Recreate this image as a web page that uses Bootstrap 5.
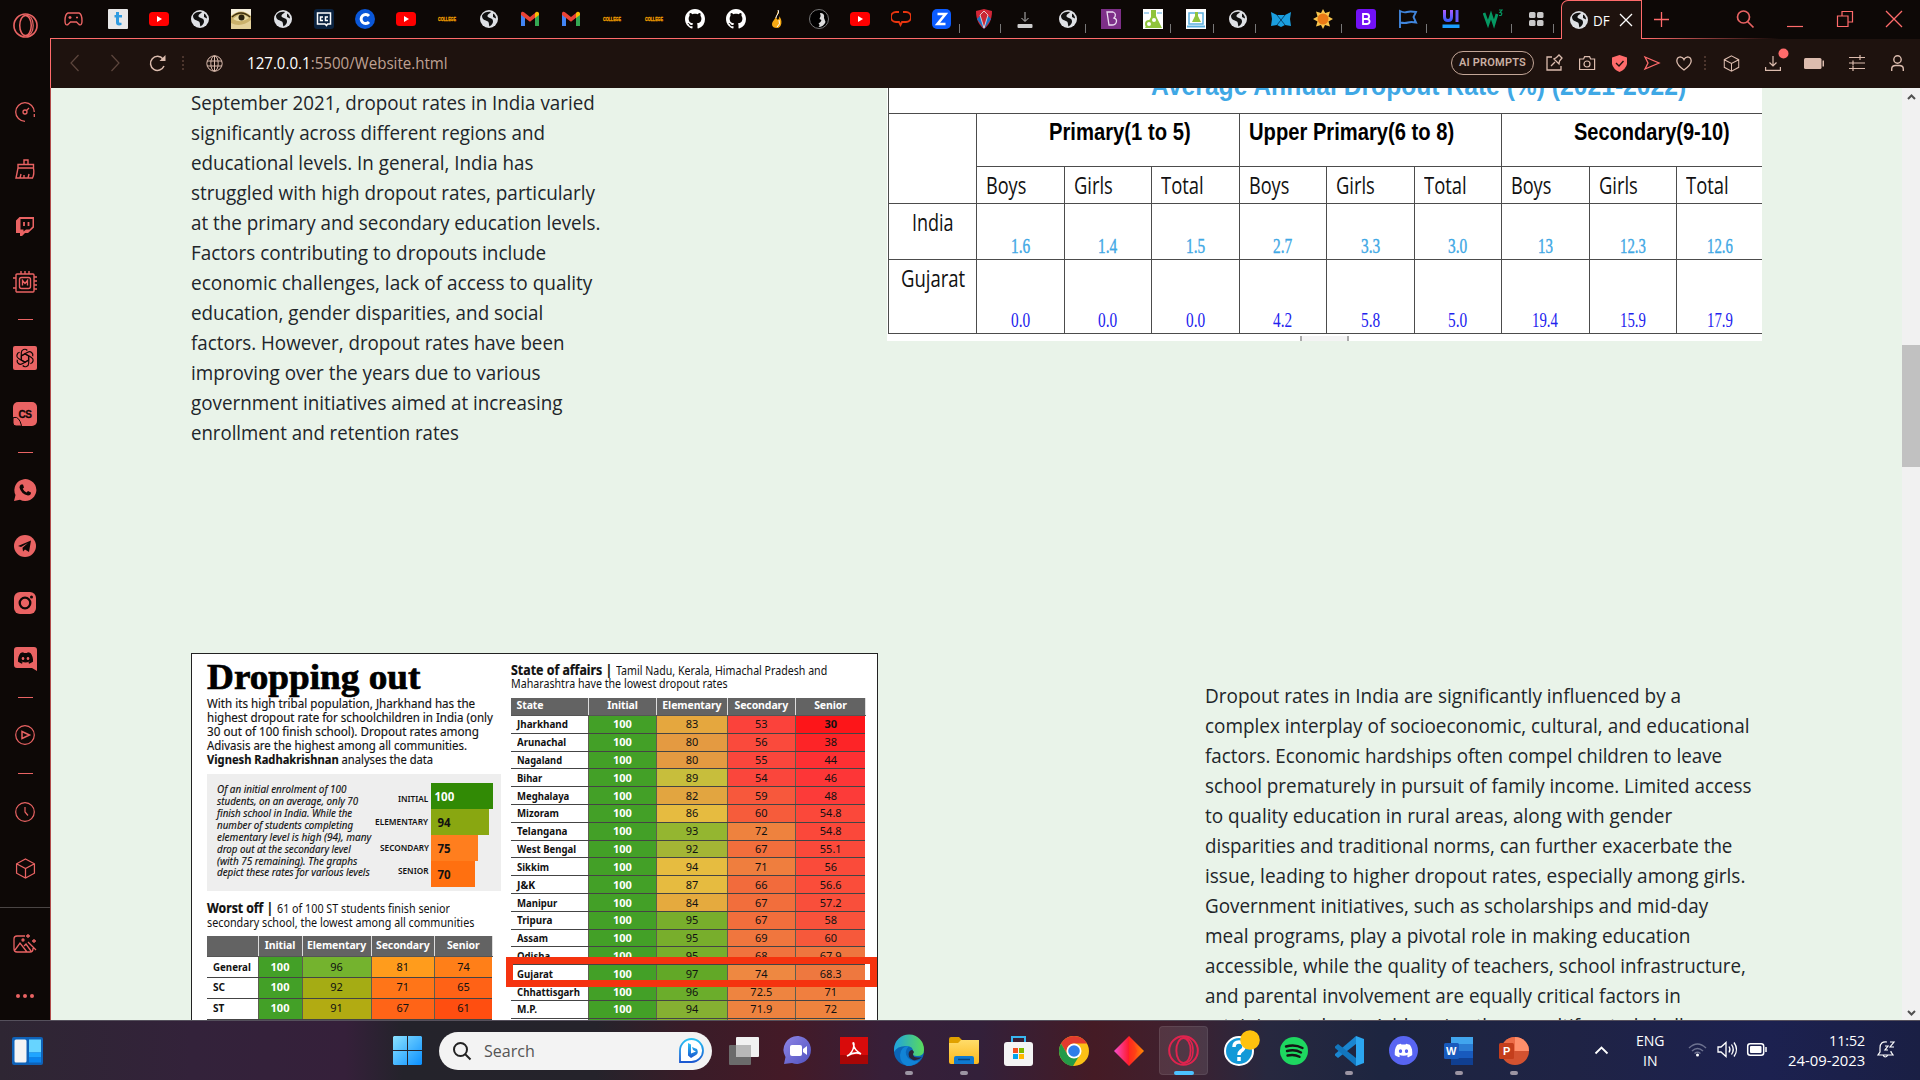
<!DOCTYPE html>
<html lang="en">
<head>
<meta charset="utf-8">
<title>Dropout rates</title>
<link href="https://cdn.jsdelivr.net/npm/bootstrap@5.3.0/dist/css/bootstrap.min.css" rel="stylesheet">
<style>
:root{--pink:#ff6b6b;--tan:#dcbcae}
body{width:1920px;height:1080px;overflow:hidden;background:#0d0806;font-family:"Open Sans","Noto Sans",sans-serif}
svg{display:block;flex:none;overflow:visible}
.fit{display:inline-block;white-space:nowrap;transform-origin:0 50%;text-align:left}
.desk{height:1020px}
.rail{width:50px;background:#0d0806;color:#e96363;padding-top:13px}
.rail .slot{height:56.5px}
.rail .first .slot{height:56.8px}
.rail .first{padding-top:46px}
.rail hr{width:15px;height:1px;margin:0;background:#e96363;opacity:1;border:0}
.tabs{height:38px;background:#0d0806}
.tabs .gx{width:47px;padding-left:14px}
.tabs .tb{width:41.24px}
.tabs .tw{width:42.56px}
.tabs .tick{position:absolute;right:3px;top:15px;width:1px;height:9px;background:#777}
.tabactive{width:81px;height:39px;margin-left:4px;background:#1e120e;border:1px solid var(--pink);border-bottom:0;border-top-left-radius:7px;color:#fff;font-size:15px;padding:0 9px 0 7px;z-index:2}
.tabactive b{font-weight:400;margin-left:4px}
.tabrule{height:1px;background:linear-gradient(90deg,var(--pink) 0 1595px,#0d0806 1730px)}
.tools{height:49px;background:#1e120e;color:var(--tan);border-left:1px solid var(--pink);padding-bottom:1px}
.aip{width:83px;height:24px;border:1.5px solid #c3a697;border-radius:12px;font:600 11px/21px Roboto,sans-serif;text-align:center;color:#cbb0a3;letter-spacing:.2px}
.vdots{width:0;height:14px;border-left:2px dotted #4b352d}
.url{font-size:16px;color:#bfa193;width:1000px}
.view{height:932px;overflow:hidden;background:#e9f3e9;border-left:1px solid #b14c4b}
.sbar{width:18px;background:#f1f1f1;color:#505050;font-size:9px}
.thumb{height:122px;width:18px;background:#c1c1c1}
.para{font-size:20px;line-height:30px;color:#212529}
.para div{height:30px;white-space:nowrap}
.sec1{height:565px;padding-left:140px}
.sec1 .para{width:696px}
.pic1{width:875px;height:253px;background:#fff;overflow:hidden;color:#111}
.pic1 table{width:875.5px;table-layout:fixed;border-collapse:collapse;margin-left:1px}
.pic1 td{border:1.5px solid #4c4c4c;padding:0 0 0 9px;vertical-align:top;overflow:visible}
.pic1 .ttl{height:25px;border-top:0;padding-left:262px}
.pic1 .ttl span{color:#3fa8e5;font:700 27px/30px "Liberation Sans",sans-serif;margin-top:-20px}
.pic1 .ttl div{height:24px;margin-top:-11px;margin-bottom:11px}
.pic1 .grp td{height:53.3px;font:700 24.5px/28px "Liberation Sans",sans-serif;color:#000;padding-top:4px}
.pic1 .grp td.far{padding-left:72px}
.pic1 .sub td{height:37.5px;font-size:24px;line-height:32px;padding-top:2px}
.pic1 .val td{vertical-align:bottom;text-align:center;padding:0 0 1px;font:21px/24px "Liberation Serif",serif;color:#3fa8e5}
.pic1 .val td:first-child{vertical-align:top;padding:2px 0 0;font:24px/32px "Open Sans",sans-serif;color:#111}
.pic1 .v1 td{height:56px;-webkit-text-stroke:.4px}
.pic1 .v2 td{height:73.5px;color:#2222ee}
.pic1 .v1 td:first-child{-webkit-text-stroke:0}
.pic1 .notch{margin:2px 0 0 413px;width:49px;height:6px;background:#f4f4f4;border:solid #aaa;border-width:0 2px}
.pic2{width:686.5px;height:420px;background:#fff;border:1.5px solid #222;color:#111;padding-left:14.5px;font-family:"Noto Sans",sans-serif;position:relative}
.pic2 .lcol{width:304px}
.pic2 h2{font:700 36px/40px "Liberation Serif",serif;margin:3px 0 0;height:40px;color:#000;-webkit-text-stroke:.7px #000}
.intro div{font-size:12.5px;line-height:14.1px;height:14.1px;-webkit-text-stroke:.15px #111}
.panelg{width:294px;height:117px;background:#eee;margin-top:7px;padding:9px 0 0 10.5px}
.panelg .ital div{font-style:italic;font-size:10.5px;line-height:11.87px;height:11.87px;-webkit-text-stroke:.15px #111}
.panelg .ital{width:152px;padding-top:1px}
.brow{height:26px;font-weight:700;font-size:11.5px}
.brow em{font-style:normal;font-weight:600;font-size:8.5px;width:59px;text-align:right;margin-right:2.5px}
.brow i{font-style:normal;height:26px;line-height:28px;padding-left:7px}
.heads{font-size:12.2px;line-height:13.6px}
.heads div{height:13.6px;white-space:nowrap}
.heads b{font-size:13.5px;margin-right:4px;-webkit-text-stroke:.2px #000}
.grid2{table-layout:fixed;border-collapse:collapse;font-size:11px;text-align:center}
.grid2 td,.grid2 th{padding:0;overflow:hidden;white-space:nowrap;border-bottom:1px solid #444;border-right:1px solid rgba(40,40,20,.75)}
.grid2 td:last-child{border-right:0}
.grid2 th{background:#636363;color:#fff;font-weight:700;font-size:10.5px;letter-spacing:-.1px;border-right:1px solid #ddd;border-bottom-color:#555}
.grid2 td:first-child,.grid2 .fst{text-align:left;font-weight:700;padding-left:6px}
.grid2 td:nth-child(2){background:#43a027;color:#fff;font-weight:700}
.redbox{position:absolute;left:314px;top:302.5px;width:371px;height:30px;border:7.5px solid #f5330f;border-left-width:7px}
.sec2{padding-left:140px}
.sec2 .para{margin:28px 0 0 327.5px}
.taskbar{height:60px;border-top:1px solid #55505c;color:#fff;background:linear-gradient(90deg,#2e2633 0,#33223a 10%,#35203a 18%,#24232b 21%,#25232b 31%,#3a1c28 36%,#441a27 41%,#371f38 46%,#33203a 51%,#451b25 57%,#40202e 61%,#27283f 66%,#1d2540 72%,#1f2345 82%,#1c2150 92%,#1a1f44 100%)}
.pill{width:273px;height:38px;border-radius:19px;background:#f3f3f3;color:#555;font-size:17px;padding:0 11px 0 14px}
.app{width:55px;height:59px;position:relative}
.app.run::after{content:"";position:absolute;left:24px;bottom:5px;width:8px;height:4px;border-radius:2px;background:#9c95a3}
.app.on::after{left:18px;width:20px;background:#4cc2ff}
.app.on::before{content:"";position:absolute;inset:5px 3px;border-radius:4px;background:rgba(255,255,255,.1);border:1px solid rgba(255,255,255,.08)}
.app svg{position:relative}
.tray{font-size:15px;line-height:20px}
</style>
</head>
<body>
<svg width="0" height="0" class="position-absolute"><defs>
<linearGradient id="gw" x1="0" y1="0" x2="1" y2="1"><stop stop-color="#8be2ff"/><stop offset="1" stop-color="#0a8fff"/></linearGradient>
<linearGradient id="ge" x1="0" y1="0" x2="1" y2="0"><stop stop-color="#1fa2e0"/><stop offset="1" stop-color="#5bdc5a"/></linearGradient>
<linearGradient id="gu" x1="0" y1="0" x2="0" y2="1"><stop stop-color="#b05cff"/><stop offset="1" stop-color="#3d5cff"/></linearGradient>
<linearGradient id="gm"><stop stop-color="#f64fd0"/><stop offset=".5" stop-color="#ff1a2a"/><stop offset="1" stop-color="#ff8a00"/></linearGradient>
<linearGradient id="gb" x1="0" y1="0" x2="0" y2="1"><stop stop-color="#29c3f5"/><stop offset="1" stop-color="#1b57d0"/></linearGradient>
<linearGradient id="gf" x1="0" y1="0" x2="0" y2="1"><stop stop-color="#ffdc6a"/><stop offset="1" stop-color="#fbb81c"/></linearGradient>
<linearGradient id="gt" x1="0" y1="0" x2="1" y2="1"><stop stop-color="#8f86e6"/><stop offset="1" stop-color="#5052c0"/></linearGradient>
<symbol id="globe" viewBox="0 0 20 20"><circle cx="10" cy="10" r="9" fill="#dfe1e5"/><path d="M3 6.500C5 3 9 2.500 12 3c-1 2-3 1.500-3.500 3.500C8 9 12 8.500 13.500 10.500 15 13 13 16 10.500 17.500 9.500 14.500 10.500 13 8 12 6 11 3 11 3 6.500z" fill="#111"/><path d="M14 4.500c2 1 3 3 3 5l-3-1.500z" fill="#111"/></symbol>
<symbol id="yt" viewBox="0 0 20 20"><rect y="3" width="20" height="14" rx="3.500" fill="#f00"/><path d="M8 7l5 3-5 3z" fill="#fff"/></symbol>
<symbol id="gmail" viewBox="0 0 20 20"><path d="M1 4v13h4V8z" fill="#4285f4"/><path d="M19 4v13h-4V8z" fill="#34a853"/><path d="M1 4.500C1 2.500 3 2.500 4 3.300l6 4.600 6-4.600V8l-6 4.700L1 6z" fill="#ea4335"/><path d="M15 4l1-.8c1.300-1 3 0 3 1.500V6l-4 3z" fill="#fbbc04"/></symbol>
<symbol id="col" viewBox="0 0 20 20"><text x="1" y="12" font-family="Liberation Sans" font-weight="700" font-size="5" textLength="18" lengthAdjust="spacingAndGlyphs" fill="#f5a300" stroke="#f5a300" stroke-width=".3">COLLEGE</text></symbol>
<symbol id="git" viewBox="0 0 16 16"><path fill="#fff" d="M8 0C3.580 0 0 3.580 0 8c0 3.540 2.290 6.530 5.470 7.590.4.070.55-.17.55-.38 0-.19-.01-.82-.01-1.490-2.010.37-2.530-.49-2.690-.94-.09-.23-.48-.94-.82-1.130-.28-.15-.68-.52-.01-.53.63-.01 1.080.58 1.230.82.72 1.210 1.870.87 2.330.66.07-.52.28-.87.51-1.070-1.780-.2-3.640-.89-3.640-3.950 0-.87.31-1.590.82-2.150-.08-.2-.36-1.020.08-2.120 0 0 .67-.21 2.200.82.64-.18 1.320-.27 2-.27s1.360.09 2 .27c1.530-1.040 2.200-.82 2.200-.82.44 1.100.16 1.920.08 2.120.51.56.82 1.270.82 2.150 0 3.070-1.870 3.750-3.650 3.950.29.25.54.73.54 1.480 0 1.070-.01 1.930-.01 2.200 0 .21.15.46.55.38A8.010 8.010 0 0 0 16 8c0-4.420-3.580-8-8-8"/></symbol>
<symbol id="tt" viewBox="0 0 20 20"><rect width="20" height="20" rx="1" fill="#e8e8e8"/><path d="M8 3h3v3h3v2.500h-3v4c0 1.500 1 1.500 2.500 1.200V16C10 17 8 16 8 13.500v-5H6.500V6H8z" fill="#2f9be0"/></symbol>
<symbol id="eye" viewBox="0 0 20 20"><rect width="20" height="20" fill="#c9b06b"/><path d="M0 0h20v7Q10-2 0 7z" fill="#f5efdc"/><path d="M0 20v-6q10 5 20-3v9z" fill="#e3d09a"/><path d="M2 10q8-8 16-1-8 6-16 1z" fill="#e9dca6"/><circle cx="10.500" cy="8.500" r="3" fill="#29210e"/><path d="M1 8q9-8 18 0" stroke="#3d3010" stroke-width="1.500" fill="none"/></symbol>
<symbol id="cc" viewBox="0 0 20 20"><rect width="20" height="20" rx="3" fill="#0b2340"/><path d="M3.500 4h13v11h-3l-1 1.500L11 15H3.500z" fill="none" stroke="#fff" stroke-width="1.500"/><path d="M9 8H6.500v3.500H9M14 8h-2.500v3.500H14" fill="none" stroke="#fff" stroke-width="1.500"/></symbol>
<symbol id="cb" viewBox="0 0 20 20"><circle cx="10" cy="10" r="10" fill="#0a57d8"/><path d="M14 7a4.500 4.500 0 1 0 0 6" fill="none" stroke="#fff" stroke-width="3"/></symbol>
<symbol id="flame" viewBox="0 0 20 20"><path d="M11 1c3 4-4 6-1 9 1 2 3-1 2-3 4 4 3 12-2 12-6 0-6-5-3-8 2-3 3-5 4-10z" fill="#f5a914"/><path d="M11 1c2 3-2 5-2 8M12 11q2 4-2 7" stroke="#fff" fill="none"/></symbol>
<symbol id="bust" viewBox="0 0 20 20"><circle cx="10" cy="10" r="9.500" fill="#000" stroke="#777"/><path d="M11 4q5 0 4 5l1.500 4q-2 5-7 5 2-2 0-3.500l2-1.500 1-2-2-1q2-3 .500-6z" fill="#ddd"/></symbol>
<symbol id="bub" viewBox="0 0 20 20"><path d="M8 3H5a4 4 0 0 0 0 10h3l1.500 3L11 13h4a4 4 0 0 0 0-10h-3" fill="none" stroke="#e8350f" stroke-width="1.800"/></symbol>
<symbol id="zz" viewBox="0 0 20 20"><rect width="19" height="20" rx="5" fill="#0b5cff"/><path d="M5.500 5h8l-8 10h8" fill="none" stroke="#fff" stroke-width="2.600"/></symbol>
<symbol id="shd" viewBox="0 0 20 20"><path d="M2 2l8-2 8 2c0 9-3 14-8 18C5 16 2 11 2 2z" fill="#d22638"/><path d="M3 10l7 10 7-10-7-7z" fill="#1a75c8"/><path d="M6 6l4-4 4 4-4 13z" fill="#ca2735" stroke="#eee" stroke-width=".8"/></symbol>
<symbol id="dlw" viewBox="0 0 20 20"><path d="M10 3v9M6.500 9l3.500 3.500L13.500 9" stroke="#bbb" fill="none"/><rect x="2.500" y="15" width="15" height="4" rx="1" fill="#ccc"/></symbol>
<symbol id="bp" viewBox="0 0 20 20"><rect width="20" height="20" fill="#7d2f88"/><path d="M6 3l6 0c3 1 3 4 1 6 4 1 3 7-2 7L8 16 6 3z" fill="none" stroke="#eadcf0" stroke-width="1.300"/></symbol>
<symbol id="lab" viewBox="0 0 20 20"><rect width="20" height="20" fill="#fff"/><path d="M8 1h5v6l6 12H2L8 8z" fill="#90c43c"/><circle cx="6" cy="15" r="3" fill="#fff" stroke="#90c43c" stroke-width="2"/><circle cx="11" cy="11" r="2" fill="#fff"/><path d="M1 4h5M14 4h5" stroke="#55a6dd"/></symbol>
<symbol id="lab2" viewBox="0 0 20 20"><rect width="20" height="20" fill="#fff"/><rect x="3" y="4" width="14" height="11" fill="none" stroke="#5bb0e0" stroke-width="1.500"/><path d="M9 3h3v4l3 6H6l3-6z" fill="#90c43c"/><path d="M1 17.500h18" stroke="#5bb0e0" stroke-width="2"/></symbol>
<symbol id="fox" viewBox="0 0 20 20"><path d="M0 3l6 3h8l6-3-1 7 1 7-6-1-4 2-4-2-6 1 1-7z" fill="#1b9fe0"/><path d="M6 6l8 10M14 6L6 16" stroke="#07466f"/></symbol>
<symbol id="sun" viewBox="0 0 20 20"><path d="M10 0l2.200 4 4.800-1.500L15.500 7.500 20 10l-4.500 2.500L17 17.500 12 16l-2 4-2-4-5 1.500 1.500-5L0 10l4.500-2.500L3 2.500 8 4z" fill="#f8c64e"/><circle cx="10" cy="10" r="5.500" fill="#ea7a16"/></symbol>
<symbol id="bs" viewBox="0 0 20 20"><rect width="20" height="20" rx="3" fill="#7211f5"/><path d="M7 5v10h3.500c4 0 4-5 .5-5H7h3.500c3.500 0 3.500-5 0-5z" fill="none" stroke="#fff" stroke-width="1.800"/></symbol>
<symbol id="flag" viewBox="0 0 20 20"><path d="M2 19V2q4 2 7 1t9 0l-2.500 5 2.500 5.500q-5-1-8 0t-8 0" fill="none" stroke="#4186dd" stroke-width="1.900"/></symbol>
<symbol id="uii" viewBox="0 0 20 20"><path d="M3.500 1v7q0 3.500 3.500 3.500T10.500 8V1" fill="none" stroke="url(#gu)" stroke-width="3"/><path d="M16 1v12" stroke="#6a5cff" stroke-width="3"/><rect x="1.500" y="15.500" width="17" height="3.500" fill="#1b9fff"/></symbol>
<symbol id="w3" viewBox="0 0 20 20"><path d="M1 4l4 11L8 6l3 9 3-10" fill="none" stroke="#059862" stroke-width="2.800"/><path d="M16 1h3l-2 2.500q3 0 1 3h-2" fill="none" stroke="#059862" stroke-width="1.200"/></symbol>
<symbol id="four" viewBox="0 0 20 20"><g fill="#c9c9c9"><rect x="3" y="3" width="6.500" height="6" rx="1.500"/><rect x="11" y="3" width="6.500" height="6" rx="1.500"/><rect x="3" y="11" width="6.500" height="6" rx="1.500"/><rect x="11" y="11" width="6.500" height="6" rx="1.500"/></g></symbol>
<symbol id="disc" viewBox="0 0 16 16"><path d="M13.545 2.907a13.200 13.200 0 0 0-3.257-1.011.05.05 0 0 0-.052.025c-.141.250-.297.577-.406.833a12.200 12.200 0 0 0-3.658 0 8 8 0 0 0-.412-.833.050.050 0 0 0-.052-.025c-1.125.194-2.220.534-3.257 1.011a.040.040 0 0 0-.021.018C.356 6.024-.213 9.047.066 12.032q.003.022.021.037a13.300 13.300 0 0 0 3.995 2.020.050.050 0 0 0 .056-.019q.463-.630.818-1.329a.050.050 0 0 0-.010-.059 9 9 0 0 1-1.248-.595.050.050 0 0 1 .020-.066l.248-.195a.050.050 0 0 1 .051-.007c2.619 1.196 5.454 1.196 8.041 0a.050.050 0 0 1 .053.007q.121.100.248.195a.050.050 0 0 1-.004.085 8 8 0 0 1-1.249.594.050.050 0 0 0-.030.030.050.050 0 0 0 .003.041c.240.465.515.909.817 1.329a.050.050 0 0 0 .056.019 13.200 13.200 0 0 0 4.001-2.020.050.050 0 0 0 .021-.037c.334-3.451-.559-6.449-2.366-9.106a.030.030 0 0 0-.020-.019M5.347 10.214c-.789 0-1.438-.724-1.438-1.612s.637-1.613 1.438-1.613c.807 0 1.450.730 1.438 1.613 0 .888-.637 1.612-1.438 1.612m5.316 0c-.788 0-1.438-.724-1.438-1.612s.637-1.613 1.438-1.613c.807 0 1.451.730 1.438 1.613 0 .888-.631 1.612-1.438 1.612"/></symbol>
<symbol id="cube" viewBox="0 0 20 20"><path d="M10 1l8.500 4.500v9L10 19l-8.500-4.500v-9zM1.500 5.500L10 10l8.500-4.500M10 10v9" fill="none" stroke="currentColor" stroke-width="1.200"/></symbol>
<symbol id="opera" viewBox="0 0 26 26"><ellipse cx="13" cy="13" rx="12" ry="12" fill="none" stroke="currentColor" stroke-width="1.700"/><ellipse cx="13" cy="13" rx="6" ry="10.500" fill="none" stroke="currentColor" stroke-width="1.600"/><path d="M13 2.500c5-1 8 4 8 10.500s-3 11-8 10.500" fill="none" stroke="currentColor" stroke-width="1.300"/></symbol>
</defs></svg>

<div class="desk d-flex">
  <nav class="rail d-flex flex-column align-items-center flex-shrink-0">
    <svg width="25" height="25" color="#e96363"><use href="#opera"/></svg>
    <div class="first d-flex flex-column align-items-center">
      <div class="slot d-flex align-items-center"><svg width="20" height="20" viewBox="0 0 20 20" fill="none" stroke="currentColor" stroke-width="1.300"><path d="M10 19.300A9.300 9.300 0 1 1 19.300 10M19.300 12v3"/><circle cx="10" cy="10" r="2"/><path d="M11.500 8.500L14 6"/></svg></div>
      <div class="slot d-flex align-items-center"><svg width="20" height="20" viewBox="0 0 20 20" fill="none" stroke="currentColor" stroke-width="1.400"><path d="M9 5V1h4v4M3 9V5.500h15.500V9zM3 9L1 19h16.500q2-4 1-10M5 19l1-4M9 19v-3M13 19l1-4"/></svg></div>
      <div class="slot d-flex align-items-center"><svg width="20" height="20" viewBox="0 0 20 20"><path d="M4.500 1H19v10.500L13 17h-3l-3 3H5v-3H1V4.500z" fill="currentColor"/><path d="M5.500 3h12v7.500l-3 3H11l-2.500 2v-2h-3z" fill="#0d0806"/><path d="M9 6v4M13.500 6v4" stroke="currentColor" stroke-width="1.800"/></svg></div>
      <div class="slot d-flex align-items-center"><svg width="24" height="24" viewBox="0 0 24 24" fill="none" stroke="currentColor" stroke-width="1.400"><rect x="3" y="3" width="18" height="18" rx="1"/><rect x="6.500" y="6.500" width="11" height="11" rx="2"/><path d="M9.500 14.500v-5l2.500 3 2.500-3v5M8 3V0M12 3V0M16 3V0M21 6h3M21 10h3M21 14h3M21 18h3M3 7H0M3 17H0"/></svg></div>
    </div>
    <hr style="margin-top:7.500px">
    <div class="d-flex align-items-center" style="height:77px"><svg width="24" height="24" viewBox="0 0 24 24"><rect width="24" height="24" rx="2" fill="currentColor"/><g fill="none" stroke="#0d0806" stroke-width="1.200"><path id="pt" d="M8.300 9.500V6.700a3.400 3.400 0 0 1 6-2.200M8.300 9.500l0 4.500 3.700 2.100"/><use href="#pt" transform="rotate(60 12 12)"/><use href="#pt" transform="rotate(120 12 12)"/><use href="#pt" transform="rotate(180 12 12)"/><use href="#pt" transform="rotate(240 12 12)"/><use href="#pt" transform="rotate(300 12 12)"/></g></svg></div>
    <div class="d-flex align-items-center" style="height:34px"><svg width="24" height="24" viewBox="0 0 24 24"><path d="M5 0h14a5 5 0 0 1 5 5v14a5 5 0 0 1-5 5H9L0 15V5a5 5 0 0 1 5-5z" fill="currentColor"/><path d="M1 15.500Q6 14 8.500 23.500L8 24H3a3 3 0 0 1-3-3v-5z" fill="currentColor" stroke="#0d0806"/><text x="5.500" y="16" font-family="Liberation Sans" font-weight="700" font-size="10" fill="#0d0806" stroke="#0d0806" stroke-width=".3" textLength="13.500">CS</text></svg></div>
    <hr style="margin-top:21px">
    <div class="d-flex flex-column" style="padding-top:9px">
      <div class="slot d-flex align-items-center"><svg width="22" height="22" viewBox="0 0 22 22"><path d="M0 22l1.500-6A11 11 0 1 1 6 20.700z" fill="currentColor"/><path d="M7 5.500l2 0 1 3-1.300 1.300q1.300 2.700 3.800 3.700L14 12l3 1.500q0 3-3 3Q7 15 5.500 8.500q0-2 1.500-3z" fill="#0d0806"/></svg></div>
      <div class="slot d-flex align-items-center"><svg width="22" height="22" viewBox="0 0 22 22"><circle cx="11" cy="11" r="11" fill="currentColor"/><path d="M4 11l13-5.500-2 11.500-4-2.500-2 2-.5-3.700 5.500-4.800-7 4z" fill="#0d0806"/></svg></div>
      <div class="slot d-flex align-items-center"><svg width="22" height="22" viewBox="0 0 22 22"><rect width="22" height="22" rx="6" fill="currentColor"/><circle cx="11" cy="11" r="5.300" fill="none" stroke="#0d0806" stroke-width="2.300"/><circle cx="17.500" cy="5" r="1.500" fill="#0d0806"/></svg></div>
      <div class="slot d-flex align-items-center"><svg width="23" height="24" viewBox="0 0 23 24"><path d="M3 0h17a3 3 0 0 1 3 3v21l-5-3H3a3 3 0 0 1-3-3V3a3 3 0 0 1 3-3z" fill="currentColor"/><svg x="4" y="3.500" width="15" height="15" fill="#0d0806"><use href="#disc"/></svg></svg></div>
    </div>
    <hr style="margin-top:9px">
    <div class="d-flex align-items-center" style="height:75px"><svg width="20" height="20" viewBox="0 0 20 20" fill="none" stroke="currentColor" stroke-width="1.200"><circle cx="10" cy="10" r="9.300"/><path d="M7 6.500l7.500 3.500L7 13.500z" stroke-width="1.500"/></svg></div>
    <hr>
    <div class="d-flex align-items-center" style="height:76px"><svg width="20" height="20" viewBox="0 0 20 20" fill="none" stroke="currentColor" stroke-width="1.200"><circle cx="10" cy="10" r="9.300"/><path d="M10 5v5l3 3.500"/></svg></div>
    <div class="d-flex align-items-center" style="height:37px"><svg width="21" height="21"><use href="#cube"/></svg></div>
    <div style="width:50px;height:1px;background:#4a4544;margin-top:20px"></div>
    <div class="d-flex align-items-center" style="height:72px"><svg width="24" height="20" viewBox="0 0 24 20" fill="none" stroke="currentColor" stroke-width="1.300"><path d="M12 2H4a3 3 0 0 0-3 3v10a3 3 0 0 0 3 3h13a3 3 0 0 0 3-3v-1M2 16l5-7 7 9M11 12l2-2 5 7M15 8l8 8M15 0v4M13 2h4M21 5v4M19 7h4"/><circle cx="10" cy="6" r="1"/></svg></div>
    <svg width="18" height="4" viewBox="0 0 18 4" style="margin-top:14px" fill="currentColor"><circle cx="2" cy="2" r="2"/><circle cx="9" cy="2" r="2"/><circle cx="16" cy="2" r="2"/></svg>
  </nav>

  <div class="flex-grow-1">
    <div class="tabs d-flex align-items-center">
      <div class="gx"><svg width="19" height="14" viewBox="0 0 19 14" fill="none" stroke="#e96363" stroke-width="1.400"><path d="M4 1h11q3 1 3 8 0 5-3 3.500L12.500 10h-6L4 12.500Q1 14 1 9q0-7 3-8z"/><path d="M6 4v3M4.500 5.500h3M12 5.500h2"/></svg></div>
      <div class="d-flex" id="strip"></div>
      <div class="tabactive d-flex align-items-center align-self-start position-relative"><svg width="20" height="20"><use href="#globe"/></svg><b><span class="fit" data-w="17">DF</span></b><svg width="12" height="12" class="ms-auto" viewBox="0 0 12 12" stroke="#fff" stroke-width="1.300"><path d="M0 0l12 12M12 0L0 12"/></svg></div>
      <svg width="15" height="15" viewBox="0 0 15 15" stroke="#ff6b6b" stroke-width="1.300" style="margin-left:12px"><path d="M7.500 0v15M0 7.500h15"/></svg>
      <svg width="18" height="18" viewBox="0 0 18 18" fill="none" stroke="#e96363" stroke-width="1.700" style="margin-left:67px"><circle cx="7.500" cy="7" r="6"/><path d="M11.500 11.500l6 6"/></svg>
      <svg width="16" height="16" viewBox="0 0 16 16" stroke="#ff6b6b" stroke-width="1.200" style="margin-left:33px"><path d="M0 15.500h16"/></svg>
      <svg width="16" height="16" viewBox="0 0 16 16" fill="none" stroke="#ff6b6b" stroke-width="1.200" style="margin-left:34px"><path d="M.5 5h10.500v10.500H.5zM5 5V.5h10.500V11H11"/></svg>
      <svg width="16" height="16" viewBox="0 0 16 16" stroke="#ff6b6b" stroke-width="1.300" style="margin-left:33px"><path d="M0 0l16 16M16 0L0 16"/></svg>
    </div>
    <div class="tabrule"></div>
    <div class="tools d-flex align-items-center">
      <svg width="9" height="16" viewBox="0 0 9 16" fill="none" stroke="#5d463d" stroke-width="1.200" style="margin-left:19px"><path d="M8.500 0L1 8l7.500 8"/></svg>
      <svg width="9" height="16" viewBox="0 0 9 16" fill="none" stroke="#5d463d" stroke-width="1.200" style="margin-left:32px"><path d="M.5 0L8 8l-7.500 8"/></svg>
      <svg width="17" height="16" viewBox="0 0 17 16" fill="none" stroke="currentColor" stroke-width="1.500" style="margin-left:29px"><path d="M15 11A7 7 0 1 1 14 4"/><path d="M16.500 0v6h-6z" fill="currentColor" stroke="none"/></svg>
      <div class="vdots" style="margin-left:16px"></div>
      <svg width="17" height="17" viewBox="0 0 17 17" fill="none" stroke="currentColor" style="margin-left:22px"><circle cx="8.500" cy="8.500" r="7.700"/><ellipse cx="8.500" cy="8.500" rx="3.700" ry="7.700"/><path d="M8.500 1v15M1 6h15M1 11h15"/></svg>
      <div class="url" style="margin-left:24px"><span class="fit" data-w="201"><span class="text-white">127.0.0.1</span>:5500/Website.html</span></div>
      <div class="d-flex align-items-center ms-auto" style="margin-right:14px">
        <div class="aip">AI PROMPTS</div>
        <svg width="16" height="16" viewBox="0 0 16 16" fill="none" stroke="currentColor" stroke-width="1.300" style="margin-left:12px"><path d="M6 2H1v13h14v-4M5 11l4-4M8 4l5 5 .5-3L16 3 13 0l-2.500 2.500z"/></svg>
        <svg width="16" height="14" viewBox="0 0 16 14" fill="none" stroke="currentColor" stroke-width="1.200" style="margin-left:17px"><path d="M.6 3h4l1-2.300h5l1 2.300h4v10.500H.6z"/><circle cx="8" cy="8" r="3"/></svg>
        <svg width="15" height="17" viewBox="0 0 15 17" style="margin-left:17px"><path d="M7.500 0L15 2.500V9q-1 5-7.500 8Q1 14 0 9V2.500z" fill="#ff6b6b"/><path d="M4 8l3 3 4.500-5" fill="none" stroke="#1e120e" stroke-width="1.400"/></svg>
        <svg width="16" height="14" viewBox="0 0 16 14" fill="none" stroke="#ff6b6b" stroke-width="1.300" style="margin-left:17px"><path d="M1 1l14 6L1 13l3-6z"/></svg>
        <svg width="16" height="15" viewBox="0 0 16 15" fill="none" stroke="currentColor" stroke-width="1.300" style="margin-left:16px"><path d="M8 14Q1 9 .8 5 1 1 4.300.8 7 1 8 3.500 9 1 11.700.8 15 1 15.200 5 15 9 8 14z"/></svg>
        <div class="vdots" style="margin-left:12px"></div>
        <svg width="17" height="17" style="margin-left:17px"><use href="#cube"/></svg>
        <svg width="16" height="16" viewBox="0 0 16 16" fill="none" stroke="currentColor" stroke-width="1.200" style="margin-left:25px"><path d="M8 1v10M4.500 7.500L8 11l3.500-3.500M.6 12v3.400h14.800V12"/><circle cx="18.500" cy="-1.500" r="5" fill="#ff6b6b" stroke="none"/></svg>
        <svg width="20" height="11" viewBox="0 0 20 11" fill="currentColor" style="margin-left:23px"><rect width="17.500" height="11" rx="1.500"/><rect x="18.500" y="2.500" width="1.500" height="6"/></svg>
        <svg width="16" height="16" viewBox="0 0 16 16" stroke="currentColor" stroke-width="1.200" style="margin-left:25px"><path d="M0 2.500h16M0 8h16M0 13.500h16M11 0v5M4 5.500v5M4 11v5"/></svg>
        <svg width="13" height="16" viewBox="0 0 13 16" fill="none" stroke="currentColor" stroke-width="1.400" style="margin-left:26px;margin-right:2px"><circle cx="6.500" cy="4.500" r="3.700"/><path d="M.7 16v-2q0-3.500 4-3.500h3.600q4 0 4 3.500v2"/></svg>
      </div>
    </div>
    <div class="d-flex">
      <main class="view flex-grow-1">
        <section class="sec1 d-flex">
          <div class="para">
            <div><span class="fit" data-w="404">September 2021, dropout rates in India varied</span></div>
            <div><span class="fit" data-w="354">significantly across different regions and</span></div>
            <div><span class="fit" data-w="342">educational levels. In general, India has</span></div>
            <div><span class="fit" data-w="404">struggled with high dropout rates, particularly</span></div>
            <div><span class="fit" data-w="409">at the primary and secondary education levels.</span></div>
            <div><span class="fit" data-w="355">Factors contributing to dropouts include</span></div>
            <div><span class="fit" data-w="401">economic challenges, lack of access to quality</span></div>
            <div><span class="fit" data-w="352">education, gender disparities, and social</span></div>
            <div><span class="fit" data-w="373">factors. However, dropout rates have been</span></div>
            <div><span class="fit" data-w="350">improving over the years due to various</span></div>
            <div><span class="fit" data-w="372">government initiatives aimed at increasing</span></div>
            <div><span class="fit" data-w="268">enrollment and retention rates</span></div>
          </div>
          <div class="pic1 flex-shrink-0">
            <table>
              <colgroup><col style="width:88px"><col span="9" style="width:87.500px"></colgroup>
              <tr><td colspan="10" class="ttl"><div><span class="fit" data-w="535">Average Annual Dropout Rate (%) (2021-2022)</span></div></td></tr>
              <tr class="grp"><td rowspan="2"></td><td colspan="3" class="far"><span class="fit" data-w="142">Primary(1 to 5)</span></td><td colspan="3"><span class="fit" data-w="205">Upper Primary(6 to 8)</span></td><td colspan="3" class="far"><span class="fit" data-w="156">Secondary(9-10)</span></td></tr>
              <tr class="sub"><td><span class="fit" data-w="40">Boys</span></td><td><span class="fit" data-w="39">Girls</span></td><td><span class="fit" data-w="43">Total</span></td><td><span class="fit" data-w="40">Boys</span></td><td><span class="fit" data-w="39">Girls</span></td><td><span class="fit" data-w="43">Total</span></td><td><span class="fit" data-w="40">Boys</span></td><td><span class="fit" data-w="39">Girls</span></td><td><span class="fit" data-w="43">Total</span></td></tr>
              <tr class="val v1"><td><span class="fit" data-w="42">India</span></td><td><span class="fit" data-w="19">1.6</span></td><td><span class="fit" data-w="19">1.4</span></td><td><span class="fit" data-w="19">1.5</span></td><td><span class="fit" data-w="19">2.7</span></td><td><span class="fit" data-w="19">3.3</span></td><td><span class="fit" data-w="19">3.0</span></td><td><span class="fit" data-w="15">13</span></td><td><span class="fit" data-w="26">12.3</span></td><td><span class="fit" data-w="26">12.6</span></td></tr>
              <tr class="val v2"><td><span class="fit" data-w="64">Gujarat</span></td><td><span class="fit" data-w="19">0.0</span></td><td><span class="fit" data-w="19">0.0</span></td><td><span class="fit" data-w="19">0.0</span></td><td><span class="fit" data-w="19">4.2</span></td><td><span class="fit" data-w="19">5.8</span></td><td><span class="fit" data-w="19">5.0</span></td><td><span class="fit" data-w="26">19.4</span></td><td><span class="fit" data-w="26">15.9</span></td><td><span class="fit" data-w="26">17.9</span></td></tr>
            </table>
            <div class="notch"></div>
          </div>
        </section>
        <section class="sec2 d-flex">
          <div class="pic2 d-flex flex-shrink-0">
            <div class="lcol flex-shrink-0">
              <h2><span class="fit" data-w="213">Dropping out</span></h2>
              <div class="intro">
                <div><span class="fit" data-w="268">With its high tribal population, Jharkhand has the</span></div>
                <div><span class="fit" data-w="286">highest dropout rate for schoolchildren in India (only</span></div>
                <div><span class="fit" data-w="272">30 out of 100 finish school). Dropout rates among</span></div>
                <div><span class="fit" data-w="260">Adivasis are the highest among all communities.</span></div>
                <div><span class="fit" data-w="226"><b>Vignesh Radhakrishnan</b> analyses the data</span></div>
              </div>
              <div class="panelg d-flex">
                <div class="ital">
                  <div><span class="fit" data-w="129">Of an initial enrolment of 100</span></div>
                  <div><span class="fit" data-w="141">students, on an average, only 70</span></div>
                  <div><span class="fit" data-w="135">finish school in India. While the</span></div>
                  <div><span class="fit" data-w="136">number of students completing</span></div>
                  <div><span class="fit" data-w="154">elementary level is high (94), many</span></div>
                  <div><span class="fit" data-w="134">drop out at the secondary level</span></div>
                  <div><span class="fit" data-w="140">(with 75 remaining). The graphs</span></div>
                  <div><span class="fit" data-w="153">depict these rates for various levels</span></div>
                </div>
                <div>
                  <div class="brow d-flex align-items-center"><em style="margin-top:5px"><span class="fit" data-w="30">INITIAL</span></em><i style="width:62px;background:#318a05;color:#fff;padding-left:4px">100</i></div>
                  <div class="brow d-flex align-items-center"><em><span class="fit" data-w="53">ELEMENTARY</span></em><i style="width:58.700px;background:#89a711">94</i></div>
                  <div class="brow d-flex align-items-center"><em><span class="fit" data-w="48.500">SECONDARY</span></em><i style="width:47px;background:#ff7e1e">75</i></div>
                  <div class="brow d-flex align-items-center"><em style="margin-top:-6px"><span class="fit" data-w="30">SENIOR</span></em><i style="width:44px;background:#ff7010">70</i></div>
                </div>
              </div>
              <div class="heads" style="margin-top:10.500px">
                <div><b class="fit" data-w="66">Worst off |</b><span class="fit" data-w="173">61 of 100 ST students finish senior</span></div>
                <div><span class="fit" data-w="267">secondary school, the lowest among all communities</span></div>
              </div>
              <table class="grid2" id="worst" style="width:285.500px;margin-top:6.500px"></table>
            </div>
            <div>
              <div class="heads" style="padding-top:9.500px">
                <div><b class="fit" data-w="101">State of affairs |</b><span class="fit" data-w="211">Tamil Nadu, Kerala, Himachal Pradesh and</span></div>
                <div><span class="fit" data-w="217">Maharashtra have the lowest dropout rates</span></div>
              </div>
              <table class="grid2" id="states" style="width:355px;margin-top:7px"></table>
            </div>
            <div class="redbox"></div>
          </div>
          <div class="para">
            <div><span class="fit" data-w="476">Dropout rates in India are significantly influenced by a</span></div>
            <div><span class="fit" data-w="544">complex interplay of socioeconomic, cultural, and educational</span></div>
            <div><span class="fit" data-w="517">factors. Economic hardships often compel children to leave</span></div>
            <div><span class="fit" data-w="547">school prematurely in pursuit of family income. Limited access</span></div>
            <div><span class="fit" data-w="467">to quality education in rural areas, along with gender</span></div>
            <div><span class="fit" data-w="527">disparities and traditional norms, can further exacerbate the</span></div>
            <div><span class="fit" data-w="540">issue, leading to higher dropout rates, especially among girls.</span></div>
            <div><span class="fit" data-w="503">Government initiatives, such as scholarships and mid-day</span></div>
            <div><span class="fit" data-w="485">meal programs, play a pivotal role in making education</span></div>
            <div><span class="fit" data-w="541">accessible, while the quality of teachers, school infrastructure,</span></div>
            <div><span class="fit" data-w="476">and parental involvement are equally critical factors in</span></div>
            <div><span class="fit" data-w="530">retaining students. Addressing these multifaceted challenges</span></div>
          </div>
        </section>
      </main>
      <div class="sbar d-flex flex-column align-items-center">
        <svg width="9" height="6" viewBox="0 0 9 6" fill="none" stroke="#505050" stroke-width="2" style="margin-top:6px"><path d="M1 5l3.500-3.500L8 5"/></svg>
        <div class="thumb" style="margin-top:245px"></div>
        <svg width="9" height="6" viewBox="0 0 9 6" fill="none" stroke="#505050" stroke-width="2" class="mt-auto mb-1"><path d="M1 1l3.500 3.500L8 1"/></svg>
      </div>
    </div>
  </div>
</div>

<footer class="taskbar d-flex align-items-center">
  <svg width="31" height="28" viewBox="0 0 31 28" style="margin-left:12px"><rect width="31" height="28" rx="2" fill="#0f62b8"/><rect x="2.500" y="2.500" width="12" height="23" rx="1.500" fill="#f4f4f4"/><rect x="17" y="2.500" width="12" height="13" fill="#67d4ff"/><rect x="17" y="15.500" width="12" height="5" fill="#1fa5ff"/><rect x="17" y="20.500" width="12" height="5" fill="#0a84ee"/></svg>
  <svg width="29" height="29" viewBox="0 0 29 29" style="margin-left:350px" fill="url(#gw)"><path d="M1 0h13v14H0V1zM15 0h13l1 1v13H15zM0 15h14v14H1l-1-1zM15 15h14v13l-1 1H15z"/></svg>
  <div class="pill d-flex align-items-center" style="margin-left:17px">
    <svg width="18" height="18" viewBox="0 0 18 18" fill="none" stroke="#222" stroke-width="2"><circle cx="7.500" cy="7.500" r="6.500"/><path d="M12 12l5.500 5.500"/></svg>
    <span class="fit" data-w="51" style="margin-left:13px">Search</span>
    <svg width="25" height="25" viewBox="0 0 25 25" style="margin-left:auto;margin-right:-3px"><path d="M1 24V12.500A11.500 11.500 0 1 1 12.500 24z" fill="#fff" stroke="url(#gb)" stroke-width="1.800"/><path d="M9 5l3 1.500v9l5-2-3-1.500-1-3 5 2q2 4-1 6l-5 3-3-2.500z" fill="url(#gb)"/></svg>
  </div>
  <div class="d-flex" style="margin-left:4px">
    <div class="app d-flex align-items-center justify-content-center"><svg width="30" height="28" viewBox="0 0 30 28"><rect y="8" width="22" height="20" rx="1" fill="#6b6b6b"/><rect x="7" width="23" height="20" rx="1" fill="#f1f1f1"/><rect x="7" y="8" width="15" height="12" fill="#b8b8b8"/></svg></div>
    <div class="app d-flex align-items-center justify-content-center"><svg width="29" height="29" viewBox="0 0 29 29"><path d="M14.500 0A14 14 0 1 1 8 27L0 28l1.500-7A14 14 0 0 1 14.500 0z" fill="url(#gt)"/><rect x="6" y="9" width="12" height="11" rx="2" fill="#fff"/><path d="M19 13l4-3v9l-4-3z" fill="#fff"/></svg></div>
    <div class="app d-flex align-items-center justify-content-center"><svg width="28" height="27" viewBox="0 0 28 27"><rect width="28" height="27" fill="#d90b0b"/><rect y="18" width="28" height="9" fill="#a80606"/><path d="M13 6q1 7 8 11-6-3-14 2 6-3 7-11 0-3-1-2z" fill="none" stroke="#fff" stroke-width="1.500"/></svg></div>
    <div class="app run d-flex align-items-center justify-content-center"><svg width="30" height="30" viewBox="0 0 30 30"><circle cx="15" cy="15" r="15" fill="#0b66b8"/><path d="M0 13A15 15 0 0 1 30 14q0 6-7 6-5 0-4-3 1-7-7-7Q3 10 0 16z" fill="url(#ge)"/><path d="M15 10q-6 6-1 12 5 5 12 2-5 6-13 6Q6 27 6 19q1-9 9-9z" fill="#1183d6"/><path d="M20 16q-2-4-5 0-2 5 4 8 5 1 9-3-9 2-9-3z" fill="#2b2338"/></svg></div>
    <div class="app run d-flex align-items-center justify-content-center"><svg width="30" height="27" viewBox="0 0 30 27"><path d="M0 2q0-2 2-2h8l3 3h17v8H0z" fill="#e0a100"/><path d="M0 6h9l3-3h18v22q0 2-2 2H2q-2 0-2-2z" fill="url(#gf)"/><path d="M5 27v-6q0-2 2-2h16q2 0 2 2v6z" fill="#0f7ad0"/><path d="M9 22.500h12" stroke="#06457e" stroke-width="1.500"/></svg></div>
    <div class="app d-flex align-items-center justify-content-center"><svg width="29" height="30" viewBox="0 0 29 30"><path d="M8 7V1h13v6" fill="none" stroke="#38b6f0" stroke-width="2"/><rect y="6" width="29" height="24" rx="3" fill="#f4f4f4"/><path d="M9 12h5v5H9z" fill="#f25022"/><path d="M15 12h5v5h-5z" fill="#7fba00"/><path d="M9 18h5v5H9z" fill="#00a4ef"/><path d="M15 18h5v5h-5z" fill="#ffb900"/></svg></div>
    <div class="app d-flex align-items-center justify-content-center"><svg width="30" height="30" viewBox="0 0 30 30"><circle cx="15" cy="15" r="15" fill="#fbc116"/><path d="M2 7.500A15 15 0 0 1 28 7.500H15A7.500 7.500 0 0 0 8.500 18.500z" fill="#e33b2e"/><path d="M2 7.500A15 15 0 0 0 14 30l7-11.500a7.500 7.500 0 0 1-12.500 0z" fill="#249a48"/><circle cx="15" cy="15" r="7.500" fill="#fff"/><circle cx="15" cy="15" r="5.800" fill="#2f7de9"/></svg></div>
    <div class="app d-flex align-items-center justify-content-center"><svg width="30" height="30" viewBox="0 0 30 30"><path d="M15 0l15 15-15 15L0 15z" fill="url(#gm)"/><path d="M15 0l8 15-8 15z" fill="#ff3a12" opacity=".5"/></svg></div>
    <div class="app run on d-flex align-items-center justify-content-center"><svg width="31" height="31" color="#e0234e"><use href="#opera"/></svg></div>
    <div class="app d-flex align-items-center justify-content-center"><svg width="30" height="30" viewBox="0 0 30 30"><circle cx="15" cy="15" r="14" fill="#1299d8" stroke="#fff" stroke-width="2"/><path d="M10 11q0-5 5-5t5 5q0 2-3 4-2 1.500-2 4M15 21v4" fill="none" stroke="#fff" stroke-width="3.500"/><circle cx="26" cy="4" r="9.800" fill="#ffc20e"/></svg></div>
    <div class="app d-flex align-items-center justify-content-center"><svg width="28" height="28" viewBox="0 0 28 28"><circle cx="14" cy="14" r="14" fill="#1ed760"/><path d="M6 9.500q9-2.500 16.500 1.500M7 14q8-2 14 1.500M7.500 18.500q7-1.500 12 1.300" fill="none" stroke="#151515" stroke-width="2.400" stroke-linecap="round"/></svg></div>
    <div class="app run d-flex align-items-center justify-content-center"><svg width="30" height="30" viewBox="0 0 30 30"><path d="M22 0l8 3v24l-8 3z" fill="#2ba6f0"/><path d="M22 0v8L4 22l-3-2.500V18z" fill="#1a86d0"/><path d="M22 30v-8L4 8l-3 2.500V12z" fill="#1276bd"/></svg></div>
    <div class="app d-flex align-items-center justify-content-center"><svg width="29" height="29" viewBox="0 0 29 29"><circle cx="14.500" cy="14.500" r="14.500" fill="#5865f2"/><svg x="5.500" y="5.500" width="18" height="18" fill="#fff"><use href="#disc"/></svg></svg></div>
    <div class="app run d-flex align-items-center justify-content-center"><svg width="30" height="28" viewBox="0 0 30 28"><path d="M7 0h22v28H7z" fill="#2b7cd3"/><path d="M7 0h22v7H7z" fill="#41a5ee"/><path d="M7 14h22v7H7z" fill="#185abd"/><path d="M7 21h22v7H7z" fill="#103f91"/><rect y="6" width="15" height="16" rx="1.500" fill="#185abd"/><text x="2" y="18" font-family="Liberation Sans" font-weight="700" font-size="11" fill="#fff">W</text></svg></div>
    <div class="app run d-flex align-items-center justify-content-center"><svg width="30" height="28" viewBox="0 0 30 28"><circle cx="16" cy="14" r="14" fill="#d35230"/><path d="M16 0a14 14 0 0 1 14 14H16z" fill="#ff8f6b"/><path d="M16 0v14H2A14 14 0 0 1 16 0z" fill="#ed6c47"/><rect y="6" width="15" height="16" rx="1.500" fill="#c43e1c"/><text x="4" y="18" font-family="Liberation Sans" font-weight="700" font-size="11" fill="#fff">P</text></svg></div>
  </div>
  <div class="tray d-flex align-items-center ms-auto" style="margin-right:25px;padding-bottom:2px">
    <svg width="13" height="8" viewBox="0 0 13 8" fill="none" stroke="#fff" stroke-width="1.800" style="margin-right:27px"><path d="M.5 7.500l6-6 6 6"/></svg>
    <div class="text-center" style="width:30px"><span class="fit" data-w="29">ENG</span><br><span class="fit" data-w="14">IN</span></div>
    <svg width="19" height="15" viewBox="0 0 19 15" fill="none" stroke="#6d7290" stroke-width="1.500" style="margin-left:23px"><path d="M1 6q8.500-8 17 0M4 9q5.500-5 11 0M6.500 11.500q3-2.500 6 0"/><circle cx="9.500" cy="13" r="1.500" fill="#fff" stroke="none"/></svg>
    <svg width="20" height="17" viewBox="0 0 20 17" fill="none" stroke="#fff" stroke-width="1.300" style="margin-left:10px"><path d="M1 6h3l5-4.500v14L4 11H1zM12 5.500q2 3 0 6M14.500 3.500q3.500 5 0 10M17 1.500q5 7 0 14"/></svg>
    <svg width="20" height="13" viewBox="0 0 20 13" fill="none" stroke="#fff" stroke-width="1.500" style="margin-left:10px"><rect x=".7" y=".7" width="16" height="11.600" rx="2.500"/><rect x="3" y="3" width="11.500" height="7" rx="1" fill="#fff" stroke="none"/><path d="M19 4v5"/></svg>
    <div class="text-end" style="margin-left:21px;width:77px"><span class="fit" data-w="36">11:52</span><br><span class="fit" data-w="77">24-09-2023</span></div>
    <svg width="18" height="18" viewBox="0 0 18 18" fill="none" stroke="#fff" stroke-width="1.200" style="margin-left:12px"><path d="M10 1Q3 0 3 7v4l-2 3h15l-2-3v-1M6 14q2 4 5 0M8 5h3L8 9h3M13 1h4l-4 5h4"/></svg>
  </div>
</footer>

<script>
const tabs = ["tt","yt","globe","eye","globe","cc","cb","yt","col","globe","gmail","gmail","col","col","git","git","flame","bust","yt","bub","zz","shd",
  "dlw","globe","bp","lab","lab2","globe","fox","sun","bs","flag","uii","w3","four"];
const ticked = [20,21,23,25,26,27,29,31,33,34];
document.getElementById("strip").innerHTML = tabs.map((id, i) =>
  `<div class="${i < 22 ? "tb" : "tw"} d-flex justify-content-center position-relative"><svg width="20" height="20"><use href="#${id}"/></svg>${ticked.includes(i) ? '<span class="tick"></span>' : ""}</div>`).join("");

function build(id, widths, heads, rows, headH, rowH) {
  let h = "<colgroup>" + widths.map(w => `<col style="width:${w}px">`).join("") + "</colgroup>";
  h += `<tr style="height:${headH}px;line-height:${headH - 2}px">` + heads.map((t, i) => `<th class="${i ? "" : "fst"}">${t}</th>`).join("") + "</tr>";
  for (const r of rows) {
    h += `<tr style="height:${rowH}px;line-height:${rowH - 2}px"><td><span class="fit" data-w="${r[1]}">${r[0]}</span></td><td>${r[0] ? 100 : ""}</td>`;
    for (let k = 2; k < r.length; k += 2) h += `<td style="background:${r[k + 1]}">${r[k]}</td>`;
    h += "</tr>";
  }
  document.getElementById(id).innerHTML = h;
}
build("worst", [51.5,44,69,63.5,57.5], ["","Initial","Elementary","Secondary","Senior"], [
  ["General",38,96,"#74b32e",81,"#ff9c1c",74,"#ff7f18"],
  ["SC",12,92,"#a5ac14",71,"#ff7518",65,"#ff6216"],
  ["ST",11,91,"#b2ab12",67,"#ff6417",61,"#ff4e10"],
  ["",1,"","#b2ab12","","#ff6417","","#ff4e10"]], 21, 20.8);
build("states", [77.6,68.7,70.3,68.4,70], ["State","Initial","Elementary","Secondary","Senior"], [
  ["Jharkhand",51,83,"#e5a73e",53,"#fb423b","<b>30</b>","#fd1519"],
  ["Arunachal",49,80,"#e49a41",56,"#fa4a3c",38,"#fd2427"],
  ["Nagaland",45,80,"#e49a41",55,"#fa463c",44,"#fd3033"],
  ["Bihar",25,89,"#c7be3c",54,"#fa463c",46,"#fd3637"],
  ["Meghalaya",52,82,"#e2a540",59,"#f7583c",48,"#fc3b39"],
  ["Mizoram",42,86,"#e6bb40",60,"#f65c3b","54.8","#fb483a"],
  ["Telangana",50,93,"#94b630",72,"#ee823e","54.8","#fb483a"],
  ["West Bengal",59,92,"#a4b535",67,"#f26e3c","55.1","#fb493a"],
  ["Sikkim",32,94,"#e6bc40",71,"#ef7e3e",56,"#fa4b3a"],
  ["J&amp;K",18,87,"#e6bb40",66,"#f26b3c","56.6","#fa4d3a"],
  ["Manipur",40,84,"#e5aa3e",67,"#f26e3c","57.2","#f94f3b"],
  ["Tripura",35,95,"#78ae2c",67,"#f26e3c",58,"#f8523b"],
  ["Assam",31,95,"#78ae2c",69,"#f0763e",60,"#f6593b"],
  ["Odisha",33,95,"#78ae2c",68,"#f0733e","67.9","#ee763f"],
  ["Gujarat",36,97,"#62a827",74,"#ee8841","68.3","#ee783f"],
  ["Chhattisgarh",63,96,"#6bad2b","72.5","#ee8440",71,"#f07f3f"],
  ["M.P.",20,94,"#85b032","71.9","#ee823f",72,"#ef833e"],
  ["",1,"","#85b032","","#ee823f","","#ef933e"]], 17.7, 17.82);

/* Squeeze each caption line to its set measure. */
document.querySelectorAll(".fit").forEach(el => {
  const natural = el.offsetWidth, w = +el.dataset.w;
  if (!natural || !w) return;
  el.style.width = w + "px";
  el.style.transform = `scaleX(${w / natural})`;
});
</script>
</body>
</html>
